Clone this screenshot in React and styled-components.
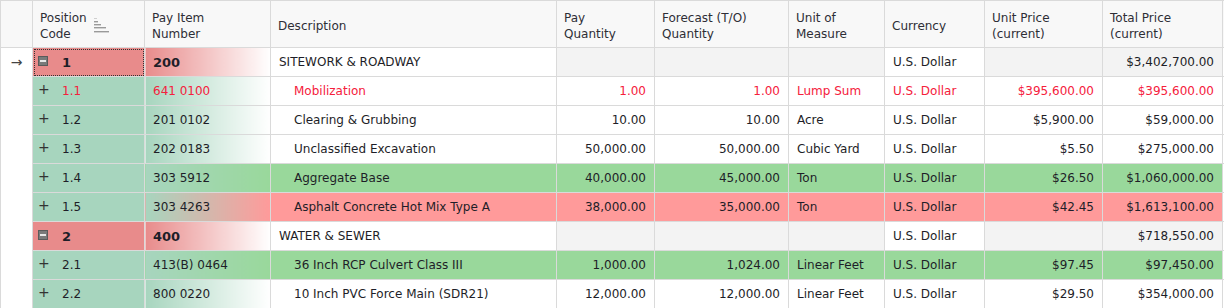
import React from 'react';
import styled, { createGlobalStyle, css } from 'styled-components';

const GlobalStyle = createGlobalStyle`
  html, body {
    margin: 0;
    padding: 0;
    background: #ffffff;
  }
  body {
    font-family: "DejaVu Sans", Verdana, sans-serif;
    font-size: 12px;
    color: #1e1e28;
  }
`;

const LINE = '#dadada';
const POS_GREEN = '#a7d5be';
const POS_RED = '#e88b8b';
const ROW_GREEN = '#99d89b';
const ROW_RED = '#ff9a9a';
const GREY = '#f3f3f3';
const ALERT = '#f5203c';

const Grid = styled.table`
  width: 1224px;
  table-layout: fixed;
  border-collapse: collapse;
  border-top: 1px solid ${LINE};
  border-left: 1px solid ${LINE};
`;

const HeadCell = styled.th`
  height: 43px;
  padding: 3px 7px 0;
  background: #f8f8f8;
  border-right: 1px solid ${LINE};
  border-bottom: 1px solid ${LINE};
  font-weight: normal;
  text-align: left;
  color: #2e2e36;
  line-height: 16px;
  vertical-align: middle;
`;

const HeadInner = styled.div`
  display: flex;
  align-items: center;
  gap: 6px;
`;

const Gutter = styled.td`
  height: 28px;
  padding: 0;
  border-right: 1px solid ${LINE};
  text-align: center;
  color: #444;
  font-size: 14px;
`;

const Cell = styled.td`
  height: 28px;
  padding: 0 8px;
  border-right: 1px solid ${LINE};
  border-bottom: 1px solid ${LINE};
  white-space: nowrap;
  overflow: hidden;
  background: ${(p) => p.$bg || '#ffffff'};
  color: ${(p) => (p.$alert ? ALERT : 'inherit')};
  text-align: ${(p) => (p.$num ? 'right' : 'left')};
  ${(p) =>
    p.$bold &&
    css`
      font-weight: bold;
      font-size: 13px;
    `}
  ${(p) =>
    p.$indent &&
    css`
      padding-left: 23px;
    `}
  ${(p) =>
    p.$tight &&
    css`
      padding-left: 5px;
    `}
  ${(p) =>
    p.$focus &&
    css`
      outline: 1px dotted #333;
      outline-offset: -2px;
    `}
`;

const PosWrap = styled.div`
  display: flex;
  align-items: center;
`;

const Toggle = styled.span`
  width: 24px;
  flex: none;
  display: inline-flex;
  align-items: center;
  font-size: 14px;
  font-weight: normal;
  color: #333;
  margin-top: -5px;
`;

const MinusBox = styled.span`
  width: 10px;
  height: 10px;
  margin-top: 2px;
  background: #7a7a7a;
  border: 1px solid #5a5a5a;
  box-sizing: border-box;
  display: inline-flex;
  align-items: center;
  justify-content: center;
  &::after {
    content: '';
    width: 6px;
    height: 2px;
    background: #e8e8e8;
  }
`;

const SortIcon = () => (
  <svg width="16" height="18" viewBox="0 0 16 18">
    <rect x="1" y="1" width="3" height="1" fill="#cfcfcf" />
    <rect x="1" y="4" width="4" height="1.4" fill="#9a9a9a" />
    <rect x="1" y="7" width="7" height="1.4" fill="#9a9a9a" />
    <rect x="1" y="10" width="12" height="1.4" fill="#9a9a9a" />
    <rect x="1" y="14" width="15" height="1.4" fill="#9a9a9a" />
  </svg>
);

const columns = [
  { w: 32 },
  { w: 112, label: ['Position', 'Code'], sort: true },
  { w: 126, label: ['Pay Item', 'Number'] },
  { w: 286, label: ['Description'] },
  { w: 98, label: ['Pay', 'Quantity'] },
  { w: 134, label: ['Forecast (T/O)', 'Quantity'] },
  { w: 96, label: ['Unit of', 'Measure'] },
  { w: 100, label: ['Currency'] },
  { w: 118, label: ['Unit Price', '(current)'] },
  { w: 120, label: ['Total Price', '(current)'] },
  { w: 2 },
];

const rows = [
  { kind: 'group', pos: '1', item: '200', desc: 'SITEWORK & ROADWAY', total: '$3,402,700.00', current: true },
  { kind: 'alert', pos: '1.1', item: '641 0100', desc: 'Mobilization', qty: '1.00', fc: '1.00', uom: 'Lump Sum', unit: '$395,600.00', total: '$395,600.00' },
  { kind: 'plain', pos: '1.2', item: '201 0102', desc: 'Clearing & Grubbing', qty: '10.00', fc: '10.00', uom: 'Acre', unit: '$5,900.00', total: '$59,000.00' },
  { kind: 'plain', pos: '1.3', item: '202 0183', desc: 'Unclassified Excavation', qty: '50,000.00', fc: '50,000.00', uom: 'Cubic Yard', unit: '$5.50', total: '$275,000.00' },
  { kind: 'green', pos: '1.4', item: '303 5912', desc: 'Aggregate Base', qty: '40,000.00', fc: '45,000.00', uom: 'Ton', unit: '$26.50', total: '$1,060,000.00' },
  { kind: 'red', pos: '1.5', item: '303 4263', desc: 'Asphalt Concrete Hot Mix Type A', qty: '38,000.00', fc: '35,000.00', uom: 'Ton', unit: '$42.45', total: '$1,613,100.00' },
  { kind: 'group', pos: '2', item: '400', desc: 'WATER & SEWER', total: '$718,550.00' },
  { kind: 'green', pos: '2.1', item: '413(B) 0464', desc: '36 Inch RCP Culvert Class III', qty: '1,000.00', fc: '1,024.00', uom: 'Linear Feet', unit: '$97.45', total: '$97,450.00' },
  { kind: 'plain', pos: '2.2', item: '800 0220', desc: '10 Inch PVC Force Main (SDR21)', qty: '12,000.00', fc: '12,000.00', uom: 'Linear Feet', unit: '$29.50', total: '$354,000.00' },
];

const rowColor = (kind) => {
  if (kind === 'green') return ROW_GREEN;
  if (kind === 'red') return ROW_RED;
  return '#ffffff';
};

const Row = ({ r }) => {
  const group = r.kind === 'group';
  const alert = r.kind === 'alert';
  const posBg = group ? POS_RED : POS_GREEN;
  const base = rowColor(r.kind);
  const itemBg = `linear-gradient(90deg, ${posBg} 0%, ${base} 100%)`;
  const numBg = group ? GREY : base;

  return (
    <tr>
      <Gutter>{r.current ? '→' : ''}</Gutter>
      <Cell $bg={posBg} $alert={alert} $bold={group} $focus={r.current} $tight>
        <PosWrap>
          <Toggle>{group ? <MinusBox /> : '+'}</Toggle>
          {r.pos}
        </PosWrap>
      </Cell>
      <Cell $bg={itemBg} $alert={alert} $bold={group}>{r.item}</Cell>
      <Cell $bg={base} $alert={alert} $indent={!group}>{r.desc}</Cell>
      <Cell $bg={numBg} $alert={alert} $num>{r.qty}</Cell>
      <Cell $bg={numBg} $alert={alert} $num>{r.fc}</Cell>
      <Cell $bg={numBg} $alert={alert}>{r.uom}</Cell>
      <Cell $bg={base} $alert={alert}>U.S. Dollar</Cell>
      <Cell $bg={numBg} $alert={alert} $num>{r.unit}</Cell>
      <Cell $bg={numBg} $alert={alert} $num>{r.total}</Cell>
      <Cell $bg="#ffffff" style={{ padding: 0 }} />
    </tr>
  );
};

const App = () => (
  <>
    <GlobalStyle />
    <Grid>
      <colgroup>
        {columns.map((c, i) => (
          <col key={i} style={{ width: c.w }} />
        ))}
      </colgroup>
      <thead>
        <tr>
          {columns.map((c, i) => (
            <HeadCell key={i} style={c.w < 10 ? { padding: 0 } : undefined}>
              {c.label && (
                <HeadInner>
                  <span>
                    {c.label.map((l, j) => (
                      <div key={j}>{l}</div>
                    ))}
                  </span>
                  {c.sort && <SortIcon />}
                </HeadInner>
              )}
            </HeadCell>
          ))}
        </tr>
      </thead>
      <tbody>
        {rows.map((r, i) => (
          <Row key={i} r={r} />
        ))}
      </tbody>
    </Grid>
  </>
);

export default App;
